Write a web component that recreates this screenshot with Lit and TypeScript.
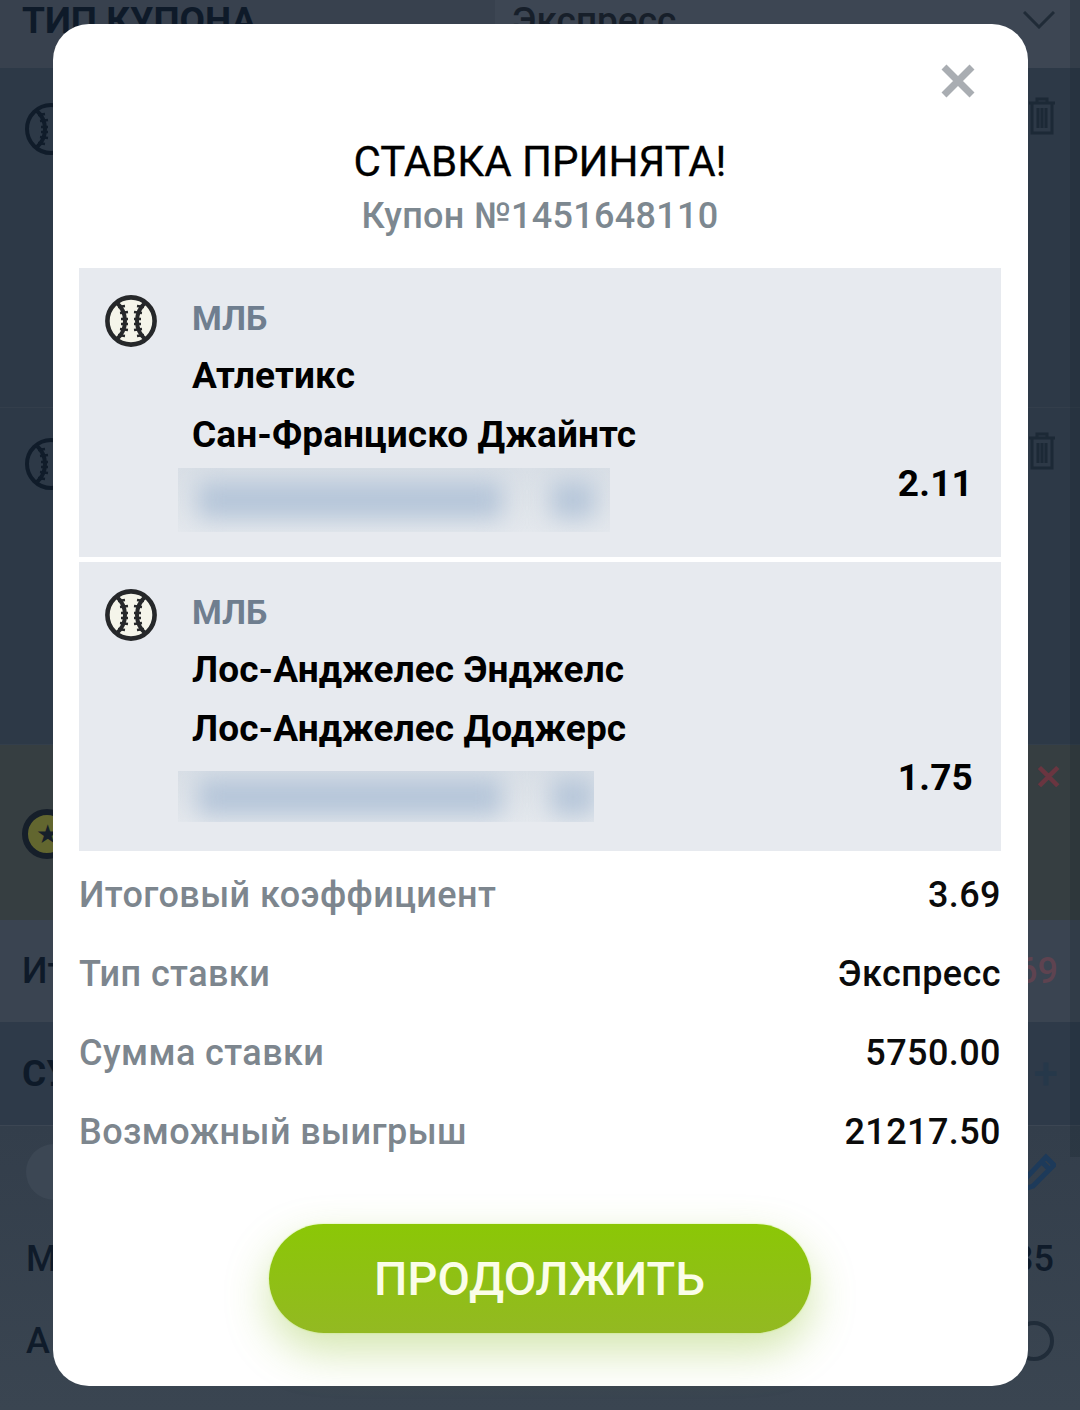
import { LitElement, html, css, svg } from "lit";
import { customElement } from "lit/decorators.js";

const seams = svg`<path d="M11 7 C18 13 20 20 20 26 C20 32 18 39 11 45" fill="none" stroke="currentColor" stroke-width="4"/>
  <path d="M41 7 C34 13 32 20 32 26 C32 32 34 39 41 45" fill="none" stroke="currentColor" stroke-width="4"/>
  <path d="M13 12 l7 -1 M15 18 l8 -1 M16 24 h7 M16 29 h7 M15 34 l8 1 M13 40 l7 1 M39 12 l-7 -1 M37 18 l-8 -1 M36 24 h-7 M36 29 h-7 M37 34 l-8 1 M39 40 l-7 1" fill="none" stroke="currentColor" stroke-width="2.4"/>`;

const ball = html`<svg class="ico" viewBox="0 0 52 52">
  <circle cx="26" cy="26" r="23.6" fill="#f5f5ea" stroke="#26282a" stroke-width="4.6"/>${seams}
</svg>`;
const dimBall = html`<svg class="bball" viewBox="0 0 52 52">
  <circle cx="26" cy="26" r="24" fill="none" stroke="currentColor" stroke-width="4"/>${seams}
</svg>`;

interface Item { a: string; b: string; k: string; bw: number; bh: number; mt: number; w1: number; w2: number; }
const items: Item[] = [
  { a: "Атлетикс", b: "Сан-Франциско Джайнтс", k: "2.11", bw: 432, bh: 64, mt: 12, w1: 304, w2: 42 },
  { a: "Лос-Анджелес Энджелс", b: "Лос-Анджелес Доджерс", k: "1.75", bw: 416, bh: 51, mt: 21, w1: 304, w2: 42 },
];
const rows = [
  ["Итоговый коэффициент", "3.69"],
  ["Тип ставки", "Экспресс"],
  ["Сумма ставки", "5750.00"],
  ["Возможный выигрыш", "21217.50"],
];

@customElement("app-root")
export class AppRoot extends LitElement {
  static styles = css`
    :host { display: block; width: 1080px; height: 1410px; position: relative; overflow: hidden;
      font-family: Roboto, "Liberation Sans", sans-serif; background: #2f3a47; }
    .bg { display: flex; flex-direction: column; height: 100%; color: #0e1a29; font-weight: 700; font-size: 37px; }
    .bhead { height: 68px; flex: none; display: grid; grid-template-columns: 473px 1fr; padding-left: 22px; background: #38414e; box-sizing: border-box; overflow: hidden; }
    .bhead span { line-height: 36px; margin-top: 3px; }
    .sel { display: flex; justify-content: space-between; padding: 0 25px 0 17px; color: #171f2a; background: #3d4653; font-weight: 500; }
    .sel span { white-space: nowrap; }
    .chev { width: 32px; height: 18px; margin-top: 11px; }
    .brow { height: 340px; flex: none; box-sizing: border-box; padding: 35px 25px 0; background: #2d3947; border-bottom: 1px solid #333e4b; display: flex; justify-content: space-between; align-items: flex-start; }
    .brow.two { height: 337px; padding-top: 30px; }
    .bball { width: 52px; height: 52px; color: #101c2a; }
    .trash { width: 26px; height: 38px; margin-top: -6px; color: #1c2936; }
    .star { height: 175px; flex: none; display: flex; justify-content: space-between; align-items: center; padding: 0 18px 0 22px; background: #363e41; box-sizing: border-box; }
    .starball { width: 50px; height: 50px; margin-top: 2px; border-radius: 50%; background: #62662f; border: 6px solid #161f2a; box-sizing: border-box; color: #161f2a; font-size: 26px; display: flex; align-items: center; justify-content: center; font-weight: 400; }
    .xr { color: #6a3540; font-size: 34px; font-weight: 700; align-self: flex-start; margin-top: 12px; }
    .tot { height: 102px; flex: none; display: flex; justify-content: space-between; align-items: center; padding: 0 22px; background: #3a4451; box-sizing: border-box; font-weight: 500; font-size: 36px; }
    .tot b { color: #5e4350; font-weight: 500; }
    .sum { height: 104px; flex: none; display: flex; justify-content: space-between; align-items: center; padding: 0 22px; background: #2e3a49; box-sizing: border-box; border-bottom: 1px solid #3c4653; }
    .sum i { font-style: normal; color: #26384a; font-weight: 500; font-size: 44px; }
    .rest { flex: 1; background: linear-gradient(#333e4b, #3a4551); padding: 18px 26px; display: flex; flex-direction: column; gap: 36px; font-weight: 500; font-size: 36px; }
    .rl { display: flex; justify-content: space-between; align-items: center; height: 46px; }
    .rl.top { height: 56px; }
    .pill { width: 200px; height: 56px; border-radius: 28px; background: #3c4754; }
    .pen { width: 36px; height: 38px; margin-right: -2px; }
    .ring { width: 40px; height: 40px; border-radius: 50%; border: 4px solid #202c39; box-sizing: border-box; }
    .m { color: #0f1b2a; }
    .side { position: absolute; right: 0; top: 0; width: 10px; height: 1157px; background: rgba(20,30,42,.22); }

    .modal { position: absolute; left: 53px; top: 24px; width: 975px; height: 1362px; background: #fff; border-radius: 36px;
      box-sizing: border-box; padding: 40px 27px 0 26px; display: flex; flex-direction: column; }
    .closew { display: flex; justify-content: flex-end; height: 34px; padding-right: 26px; }
    .close { width: 34px; height: 34px; }
    h1 { margin: 40px 0 0; font-size: 42px; line-height: 48px; font-weight: 400; color: #000; text-align: center; -webkit-text-stroke: .3px #000; }
    .cp { margin-top: 7px; font-size: 36px; line-height: 46px; color: #7d8890; text-align: center; letter-spacing: .3px; font-weight: 500; }
    .items { margin-top: 29px; display: flex; flex-direction: column; gap: 5px; }
    .item { height: 289px; box-sizing: border-box; background: #e7eaef; padding: 27px 29px 0 26px; display: grid; grid-template-columns: 87px 1fr; position: relative; }
    .ico { width: 52px; height: 52px; color: #26282a; }
    .lg { font-size: 34px; line-height: 46px; font-weight: 700; color: #6f7e8f; }
    .tm { font-size: 37px; line-height: 42px; font-weight: 700; color: #000; margin-top: 14px; letter-spacing: .1px; }
    .tm + .tm { margin-top: 17px; }
    .blur { margin-left: -14px; background: linear-gradient(#d9dfe6, #e4e8ed); display: flex; align-items: center; gap: 50px; padding: 0 0 0 20px; box-sizing: border-box; overflow: hidden; }
    .blur i { display: block; height: 36px; flex: none; background: #b3c4d8; filter: blur(12px); }
    .k { font-size: 37px; font-weight: 700; color: #000; line-height: 44px; position: absolute; right: 28px; top: 194px; letter-spacing: .2px; }
    .sums { display: flex; flex-direction: column; margin-top: 4px; }
    .r { height: 79px; display: flex; align-items: center; justify-content: space-between; font-size: 36px; letter-spacing: .42px; }
    .r span { color: #7d868e; font-weight: 500; }
    .r b { font-weight: 500; color: #0b0b0b; }
    .btn { align-self: center; margin-top: 53px; margin-left: -1px; width: 542px; height: 109px; border-radius: 55px; border: 0; background: linear-gradient(#8bc706, #93b922);
      color: #fbfde8; font: 500 47px Roboto, sans-serif; box-shadow: 0 18px 44px rgba(140,190,40,.38), 0 0 2px #d4f58a; }
  `;

  render() {
    return html`
      <div class="bg">
        <div class="bhead"><span>ТИП КУПОНА</span>
          <div class="sel"><span>Экспресс</span><svg class="chev" viewBox="0 0 32 18"><path d="M1 1 L16 16 L31 1" fill="none" stroke="#202b37" stroke-width="3"/></svg></div>
        </div>
        <div class="brow">${dimBall}${this.trash()}</div>
        <div class="brow two">${dimBall}${this.trash()}</div>
        <div class="star"><div class="starball">★</div><span class="xr">✕</span></div>
        <div class="tot"><span>Итого</span><b>3.69</b></div>
        <div class="sum"><span>СУММА</span><i>+</i></div>
        <div class="rest">
          <div class="rl top"><div class="pill"></div><svg class="pen" viewBox="0 0 36 38"><path d="M4 36 L6 25 L26 4 L34 12 L13 33 Z M22 9 l8 8" fill="none" stroke="#1d3a5a" stroke-width="5"/></svg></div>
          <div class="rl m"><span>М</span><span>35</span></div>
          <div class="rl m"><span>А</span><div class="ring"></div></div>
        </div>
      </div>
      <div class="side"></div>
      <div class="modal">
        <div class="closew"><svg class="close" viewBox="0 0 34 34"><path d="M3 3 L31 31 M31 3 L3 31" stroke="#a9adb2" stroke-width="7"/></svg></div>
        <h1>СТАВКА ПРИНЯТА!</h1>
        <div class="cp">Купон №1451648110</div>
        <div class="items">
          ${items.map((i) => html`<div class="item">
            ${ball}
            <div>
              <div class="lg">МЛБ</div>
              <div class="tm">${i.a}</div>
              <div class="tm">${i.b}</div>
              <div class="blur" style="width:${i.bw}px;height:${i.bh}px;margin-top:${i.mt}px"><i style="width:${i.w1}px"></i><i style="width:${i.w2}px"></i></div>
            </div>
            <div class="k">${i.k}</div>
          </div>`)}
        </div>
        <div class="sums">
          ${rows.map(([a, b]) => html`<div class="r"><span>${a}</span><b>${b}</b></div>`)}
        </div>
        <button class="btn">ПРОДОЛЖИТЬ</button>
      </div>
    `;
  }

  trash() {
    return html`<svg class="trash" viewBox="0 0 26 38"><path d="M0 6 H26 M8 6 V2 H18 V6 M3 6 V36 H23 V6 M9 11 V31 M13 11 V31 M17 11 V31" fill="none" stroke="currentColor" stroke-width="3"/></svg>`;
  }
}
